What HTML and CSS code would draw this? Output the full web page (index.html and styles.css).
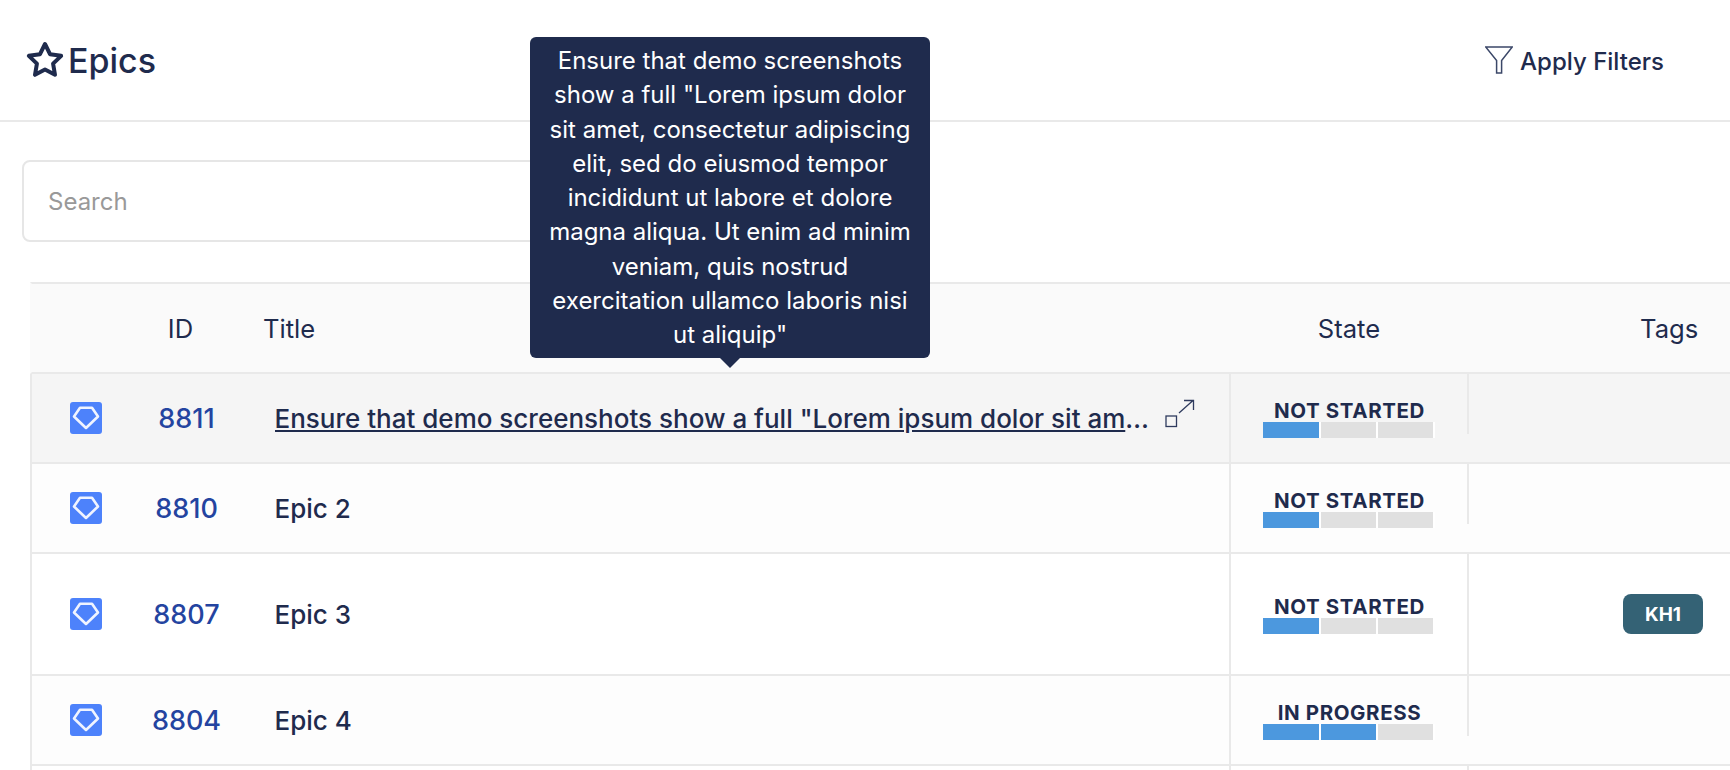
FILE: index.html
```html
<!DOCTYPE html>
<html lang="en">
<head>
<meta charset="utf-8">
<title>Epics</title>
<link rel="stylesheet" href="styles.css">
</head>
<body>
<header class="topbar">
  <div class="heading">
    <svg class="star" viewBox="0 0 24 24"><polygon points="12 2.4 15 8.5 21.7 9.5 16.85 14.2 18 20.9 12 17.75 6 20.9 7.15 14.2 2.3 9.5 9 8.5"/></svg>
    <h1 class="heading-text">Epics</h1>
  </div>
  <div class="filters">
    <svg class="funnel" viewBox="0 0 28 28"><path d="M0.7 1h26.6L16.6 14.5V27h-5V14.5z"/></svg>
    <span>Apply Filters</span>
  </div>
</header>

<div class="search"><span class="placeholder">Search</span></div>

<section class="table">
  <div class="row row-head">
    <div></div>
    <div class="head-id">ID</div>
    <div class="head-title">Title</div>
    <div class="head-state">State</div>
    <div></div>
    <div class="head-tags">Tags</div>
  </div>

  <div class="row row-hover">
    <div class="cell-icon"><svg class="type" viewBox="0 0 32 32"><rect width="32" height="32" rx="3"/><path d="M10 5.8h12l6 8.7L16 26 4 14.5z"/></svg></div>
    <div class="cell-id">8811</div>
    <div class="cell-title">
      <a class="title-link">Ensure that demo screenshots show a full "Lorem ipsum dolor sit amet, consectetur adipiscing elit, sed do eiusmod tempor incididunt ut labore et dolore magna aliqua.</a>
      <svg class="expand" viewBox="0 0 30 30"><rect x="1" y="17" width="10.5" height="10.5"/><path d="M14 14L28 1.500M19 1.500h9.500V11"/></svg>
    </div>
    <div class="cell-state">
      <div class="state-label">NOT STARTED</div>
      <div class="bar"><i class="on"></i><i></i><i></i></div>
    </div>
    <div class="rule"></div>
    <div class="cell-tags"></div>
  </div>

  <div class="row">
    <div class="cell-icon"><svg class="type" viewBox="0 0 32 32"><rect width="32" height="32" rx="3"/><path d="M10 5.8h12l6 8.7L16 26 4 14.5z"/></svg></div>
    <div class="cell-id">8810</div>
    <div class="cell-title"><span class="title-text">Epic 2</span></div>
    <div class="cell-state">
      <div class="state-label">NOT STARTED</div>
      <div class="bar"><i class="on"></i><i></i><i></i></div>
    </div>
    <div class="rule"></div>
    <div class="cell-tags"></div>
  </div>

  <div class="row row-tall">
    <div class="cell-icon"><svg class="type" viewBox="0 0 32 32"><rect width="32" height="32" rx="3"/><path d="M10 5.8h12l6 8.7L16 26 4 14.5z"/></svg></div>
    <div class="cell-id">8807</div>
    <div class="cell-title"><span class="title-text">Epic 3</span></div>
    <div class="cell-state">
      <div class="state-label">NOT STARTED</div>
      <div class="bar"><i class="on"></i><i></i><i></i></div>
    </div>
    <div class="rule rule-full"></div>
    <div class="cell-tags"><span class="tag">KH1</span></div>
  </div>

  <div class="row">
    <div class="cell-icon"><svg class="type" viewBox="0 0 32 32"><rect width="32" height="32" rx="3"/><path d="M10 5.8h12l6 8.7L16 26 4 14.5z"/></svg></div>
    <div class="cell-id">8804</div>
    <div class="cell-title"><span class="title-text">Epic 4</span></div>
    <div class="cell-state">
      <div class="state-label">IN PROGRESS</div>
      <div class="bar"><i class="on"></i><i class="on"></i><i></i></div>
    </div>
    <div class="rule"></div>
    <div class="cell-tags"></div>
  </div>

  <div class="row row-next">
    <div></div><div></div><div class="cell-title"></div><div class="cell-state"></div><div class="rule rule-full"></div><div></div>
  </div>
</section>

<div class="tooltip">Ensure that demo screenshots show a full "Lorem ipsum dolor sit amet, consectetur adipiscing elit, sed do eiusmod tempor incididunt ut labore et dolore magna aliqua. Ut enim ad minim veniam, quis nostrud exercitation ullamco laboris nisi ut aliquip"</div>
</body>
</html>
```

FILE: styles.css
```css
* { box-sizing: border-box; }

html, body {
  margin: 0;
  height: 770px;
  overflow: hidden;
}

body {
  position: relative;
  background: #fff;
  color: #1f2b4d;
  font-family: Inter, "Liberation Sans", sans-serif;
}

.topbar {
  display: flex;
  align-items: center;
  justify-content: space-between;
  height: 122px;
  padding: 0 66px 0 25px;
  border-bottom: 2px solid #e9e9e9;
}

.heading {
  display: flex;
  align-items: center;
  gap: 3px;
}

.star {
  width: 40px;
  height: 40px;
  fill: none;
  stroke: #1f2b4d;
  stroke-width: 2.400;
  stroke-linejoin: round;
}

.heading-text {
  margin: 2px 0 0;
  font-size: 34px;
  font-weight: 500;
  line-height: 40px;
}

.filters {
  display: flex;
  align-items: center;
  gap: 7px;
  padding-top: 3px;
  font-size: 24px;
  font-weight: 500;
}

.funnel {
  width: 28px;
  height: 28px;
  margin-top: -4px;
  fill: none;
  stroke: #3b4768;
  stroke-width: 1.5;
}

.search {
  display: flex;
  align-items: center;
  width: 800px;
  height: 82px;
  margin: 38px 0 0 22px;
  padding-left: 24px;
  border: 2px solid #e6e6e6;
  border-radius: 8px;
}

.placeholder {
  color: #999;
  font-size: 24px;
}

.table {
  margin: 40px 0 0 30px;
  width: 1700px;
}

.row {
  display: grid;
  grid-template-columns: 108px 93px 996px 238px 2px 1fr;
  align-items: center;
  height: 90px;
  border-left: 2px solid #e9e9e9;
  border-bottom: 2px solid #e9e9e9;
  background: #fdfdfd;
}

.row-head {
  height: 92px;
  border-top: 2px solid #e9e9e9;
  border-left: 2px solid #fafafa;
  background: #fafafa;
  font-size: 25.600px;
}

.row-hover { background: #f5f5f5; }
.row-tall { height: 122px; background: #fff; }
.row-next { background: #fff; }

.head-id { padding-right: 12px; text-align: center; }
.head-title { padding-left: 30px; }
.head-state { padding-left: 2px; text-align: center; }
.head-tags { padding-left: 171px; }

.cell-icon { display: flex; justify-content: center; }

.type { width: 32px; height: 32px; display: block; }
.type rect { fill: #4d82fb; }
.type path {
  fill: none;
  stroke: #f0f4ff;
  stroke-width: 2.600;
  stroke-linejoin: round;
}

.cell-id {
  padding-top: 1px;
  color: #2444a0;
  font-size: 27px;
  font-weight: 500;
  text-align: center;
}

.cell-title {
  display: flex;
  align-items: center;
  align-self: stretch;
  padding: 1px 0 0 41.500px;
  font-size: 26px;
  font-weight: 500;
}

.title-link {
  flex: none;
  width: 882px;
  overflow: hidden;
  text-decoration: underline;
  text-overflow: ellipsis;
  white-space: nowrap;
}

.expand {
  flex: none;
  width: 30px;
  height: 30px;
  margin: -10px 0 0 8.500px;
  fill: none;
  stroke: #2f3b5e;
  stroke-width: 1.3;
}

.cell-state {
  display: flex;
  flex-direction: column;
  align-items: center;
  justify-content: center;
  align-self: stretch;
  border-left: 2px solid #e9e9e9;
}

.state-label {
  margin-bottom: -1px;
  padding: 1px 0 0 1px;
  font-size: 20.500px;
  font-weight: 700;
  line-height: 24px;
  letter-spacing: 0.6px;
}

.bar {
  display: flex;
  width: 172px;
  height: 16px;
  background: #fff;
}

.bar i {
  flex: none;
  width: 55px;
  margin-right: 2px;
  background: #e0e0e0;
}

.bar i:first-child { width: 56px; }
.bar .on { background: #4c98de; }

.rule {
  align-self: start;
  height: 60px;
  background: #e9e9e9;
}

.rule-full { align-self: stretch; height: auto; }

.cell-tags { padding-left: 154px; }

.tag {
  display: inline-flex;
  align-items: center;
  justify-content: center;
  width: 80px;
  height: 40px;
  border-radius: 8px;
  background: #346275;
  color: #fff;
  font-size: 19px;
  font-weight: 700;
}

.tooltip {
  position: absolute;
  top: 37px;
  left: 530px;
  width: 400px;
  height: 321px;
  padding: 7px 16px 0;
  border-radius: 6px;
  background: #1f2b4d;
  color: #fff;
  font-size: 24px;
  line-height: 34.300px;
  text-align: center;
}

.tooltip::after {
  content: "";
  position: absolute;
  left: 190px;
  bottom: -10px;
  border-top: 10px solid #1f2b4d;
  border-left: 10px solid transparent;
  border-right: 10px solid transparent;
}
```
